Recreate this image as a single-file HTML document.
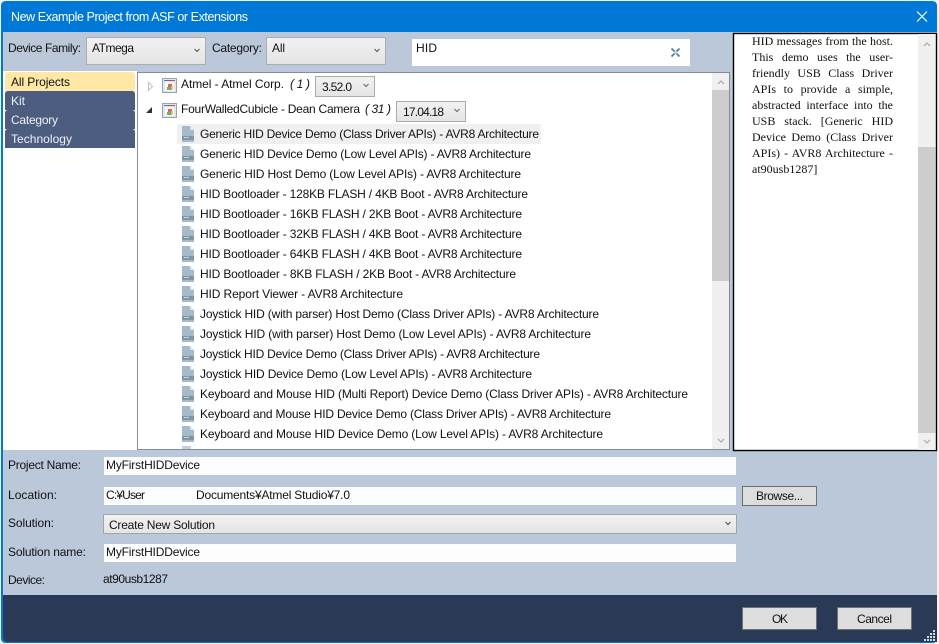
<!DOCTYPE html>
<html><head><meta charset="utf-8"><title>New Example Project from ASF or Extensions</title>
<style>
html,body{margin:0;padding:0;width:939px;height:644px;overflow:hidden;background:#f2f2f2}
svg{position:absolute;left:0;top:0}
svg text{font-family:"Liberation Sans",sans-serif;font-size:12px;fill:#111}
.d{position:absolute;left:752px;width:141px;height:16px;line-height:16px;font:12px/16px "Liberation Serif",serif;color:#111;text-align:justify;text-align-last:justify;white-space:normal}
</style></head><body>
<svg width="939" height="644" viewBox="0 0 939 644">
<defs>
<linearGradient id="g" x1="0" y1="0" x2="0" y2="1"><stop offset="0" stop-color="#f2f2f2"/><stop offset="1" stop-color="#e4e4e4"/></linearGradient>
<g id="ic"><path d="M0 0h8l4 4v12H0z" fill="#a6bac9"/><path d="M8 0l4 4H8z" fill="#dde6ec"/><rect y="10" width="12" height="4" fill="#7f96a7"/><rect x="2" y="11" width="5" height="1" fill="#c9d5dd"/></g>
<g id="tr"><rect x=".5" y=".5" width="14" height="14" fill="#dfe6ee" stroke="#97a3b1"/><rect x="2" y="2" width="4" height="1" fill="#3f7fc4"/><rect x="6" y="2" width="7" height="1" fill="#c24a4a"/><rect x="3" y="4" width="9" height="9" fill="#f7f9fb"/><rect x="6" y="6" width="4" height="3" fill="#d9635f"/><rect x="5" y="9" width="5" height="3" fill="#6fae6f"/><rect x="9" y="8" width="2" height="3" fill="#e6c34a"/></g>
</defs>
<!-- window -->
<path d="M6 1H932q5 0 5 5V638q0 5-5 5H6q-5 0-5-5V6q0-5 5-5z" fill="#0078d7"/>
<rect x="3" y="32" width="934" height="563" fill="#bac8d9"/>
<path d="M3 595H937V642H8q-5 0-5-5z" fill="#2a3a56"/>
<text x="11" y="21" textLength="237" lengthAdjust="spacing" style="fill:#fff;font-size:12.5px">New Example Project from ASF or Extensions</text>
<path d="M917 11.500l10 10M927 11.500l-10 10" stroke="#fff" stroke-width="1.200" fill="none"/>

<!-- top row -->
<text x="8" y="52" textLength="73">Device Family:</text>
<rect x="86.500" y="37.500" width="119" height="27" fill="url(#g)" stroke="#acacac"/>
<text x="92" y="52" textLength="42">ATmega</text>
<path d="M194.500 49l2.500 2.500 2.500-2.500" stroke="#555" fill="none"/>
<text x="212" y="52" textLength="50">Category:</text>
<rect x="266.500" y="37.500" width="119" height="27" fill="url(#g)" stroke="#acacac"/>
<text x="272" y="52" textLength="13">All</text>
<path d="M374.500 49l2.500 2.500 2.500-2.500" stroke="#555" fill="none"/>
<rect x="412" y="39" width="278" height="27" fill="#fff"/>
<text x="416" y="52" textLength="21">HID</text>
<path d="M671.500 48.500l8 8M679.500 48.500l-8 8" stroke="#4f7ea8" stroke-width="1.800" fill="none"/>
<circle cx="675.500" cy="52.500" r="1.500" fill="#c4d4e2"/>

<!-- sidebar -->
<rect x="3" y="71" width="134" height="379" fill="#fff"/>
<path d="M8 72H132q3 0 3 3V91H5V75q0-3 3-3z" fill="#ffe8a6"/>
<path d="M8 91H132q3 0 3 3v16H5V94q0-3 3-3z" fill="#4d5d80"/>
<path d="M8 110H132q3 0 3 3v16H5v-16q0-3 3-3z" fill="#4d5d80"/>
<path d="M8 129H132q3 0 3 3v16H5v-16q0-3 3-3z" fill="#4d5d80"/>
<text x="11" y="86" textLength="59">All Projects</text>
<text x="11" y="105" textLength="14" style="fill:#eef1f6">Kit</text>
<text x="11" y="124" textLength="47" style="fill:#eef1f6">Category</text>
<text x="11" y="143" textLength="61" style="fill:#eef1f6">Technology</text>

<!-- list -->
<rect x="137.500" y="72.500" width="592" height="377" fill="#fff" stroke="#868b96"/>
<rect x="712" y="73" width="17" height="376" fill="#f0f0f0"/>
<rect x="712" y="90" width="17" height="191" fill="#cdcdcd"/>
<path d="M718 84l3-3 3 3" stroke="#b0b0b0" stroke-width="1.300" fill="none"/>
<path d="M718 439l3 3 3-3" stroke="#b0b0b0" stroke-width="1.300" fill="none"/>
<path d="M148.500 82.500v8l4-4z" fill="#fff" stroke="#c0c0c0"/>
<path d="M152 107v6h-6z" fill="#333"/>
<use href="#tr" x="162" y="78"/>
<use href="#tr" x="162" y="103"/>
<text x="181" y="88" textLength="103">Atmel - Atmel Corp.</text>
<text x="290" y="88" textLength="20" style="font-style:italic">( 1 )</text>
<rect x="315.500" y="76.500" width="59" height="20" fill="url(#g)" stroke="#acacac"/>
<text x="322" y="91" textLength="30">3.52.0</text>
<path d="M363.500 84l2.500 2.500 2.500-2.500" stroke="#666" fill="none"/>
<text x="181" y="113" textLength="179">FourWalledCubicle - Dean Camera</text>
<text x="365" y="113" textLength="26" style="font-style:italic">( 31 )</text>
<rect x="396.500" y="101.500" width="69" height="20" fill="url(#g)" stroke="#acacac"/>
<text x="403" y="116" textLength="41">17.04.18</text>
<path d="M454.500 109l2.500 2.500 2.500-2.500" stroke="#666" fill="none"/>
<rect x="177" y="124" width="364" height="20" fill="#f0f0f0"/>
<use href="#ic" x="182" y="126"/><text x="200" y="138" textLength="339">Generic HID Device Demo (Class Driver APIs) - AVR8 Architecture</text>
<use href="#ic" x="182" y="146"/><text x="200" y="158" textLength="331">Generic HID Device Demo (Low Level APIs) - AVR8 Architecture</text>
<use href="#ic" x="182" y="166"/><text x="200" y="178" textLength="321">Generic HID Host Demo (Low Level APIs) - AVR8 Architecture</text>
<use href="#ic" x="182" y="186"/><text x="200" y="198" textLength="328">HID Bootloader - 128KB FLASH / 4KB Boot - AVR8 Architecture</text>
<use href="#ic" x="182" y="206"/><text x="200" y="218" textLength="322">HID Bootloader - 16KB FLASH / 2KB Boot - AVR8 Architecture</text>
<use href="#ic" x="182" y="226"/><text x="200" y="238" textLength="322">HID Bootloader - 32KB FLASH / 4KB Boot - AVR8 Architecture</text>
<use href="#ic" x="182" y="246"/><text x="200" y="258" textLength="322">HID Bootloader - 64KB FLASH / 4KB Boot - AVR8 Architecture</text>
<use href="#ic" x="182" y="266"/><text x="200" y="278" textLength="316">HID Bootloader - 8KB FLASH / 2KB Boot - AVR8 Architecture</text>
<use href="#ic" x="182" y="286"/><text x="200" y="298" textLength="203">HID Report Viewer - AVR8 Architecture</text>
<use href="#ic" x="182" y="306"/><text x="200" y="318" textLength="399">Joystick HID (with parser) Host Demo (Class Driver APIs) - AVR8 Architecture</text>
<use href="#ic" x="182" y="326"/><text x="200" y="338" textLength="391">Joystick HID (with parser) Host Demo (Low Level APIs) - AVR8 Architecture</text>
<use href="#ic" x="182" y="346"/><text x="200" y="358" textLength="340">Joystick HID Device Demo (Class Driver APIs) - AVR8 Architecture</text>
<use href="#ic" x="182" y="366"/><text x="200" y="378" textLength="332">Joystick HID Device Demo (Low Level APIs) - AVR8 Architecture</text>
<use href="#ic" x="182" y="386"/><text x="200" y="398" textLength="488">Keyboard and Mouse HID (Multi Report) Device Demo (Class Driver APIs) - AVR8 Architecture</text>
<use href="#ic" x="182" y="406"/><text x="200" y="418" textLength="411">Keyboard and Mouse HID Device Demo (Class Driver APIs) - AVR8 Architecture</text>
<use href="#ic" x="182" y="426"/><text x="200" y="438" textLength="403">Keyboard and Mouse HID Device Demo (Low Level APIs) - AVR8 Architecture</text>
<rect x="182" y="446" width="9" height="3" fill="#c5d2db"/>

<!-- description pane -->
<rect x="733.500" y="33.500" width="203" height="417" fill="#fff" stroke="#000" stroke-width="1.400"/>
<rect x="918" y="34" width="17.500" height="416" fill="#f0f0f0"/>
<rect x="918" y="147" width="17.500" height="286" fill="#cdcdcd"/>
<path d="M924 46l3-3 3 3" stroke="#b0b0b0" stroke-width="1.300" fill="none"/>
<path d="M924 440l3 3 3-3" stroke="#b0b0b0" stroke-width="1.300" fill="none"/>

<!-- form -->
<text x="8" y="469" textLength="73">Project Name:</text>
<rect x="104" y="457" width="632" height="18" fill="#fdfdfd"/>
<text x="106" y="469" textLength="94">MyFirstHIDDevice</text>
<text x="8" y="499" textLength="49">Location:</text>
<rect x="104" y="487" width="632" height="18" fill="#fdfdfd"/>
<text x="106" y="499" textLength="39">C:¥User</text>
<text x="196" y="499" textLength="154">Documents¥Atmel Studio¥7.0</text>
<rect x="742.500" y="486.500" width="74" height="19" fill="#ddd" stroke="#707070"/>
<text x="756" y="500" textLength="47">Browse...</text>
<text x="8" y="527" textLength="46">Solution:</text>
<rect x="103.500" y="514.500" width="633" height="19" fill="url(#g)" stroke="#a4a4a4"/>
<text x="109" y="529" textLength="106">Create New Solution</text>
<path d="M725.500 522l2.500 2.500 2.500-2.500" stroke="#555" stroke-width="1.200" fill="none"/>
<text x="8" y="556" textLength="78">Solution name:</text>
<rect x="104" y="544" width="632" height="18" fill="#fdfdfd"/>
<text x="106" y="556" textLength="94">MyFirstHIDDevice</text>
<text x="8" y="584" textLength="37">Device:</text>
<text x="103" y="583" textLength="65">at90usb1287</text>

<!-- footer buttons -->
<rect x="742.500" y="607.500" width="74" height="22" fill="#ddd" stroke="#707070"/>
<text x="772" y="623" textLength="16">OK</text>
<rect x="837.500" y="607.500" width="74" height="22" fill="#ddd" stroke="#707070"/>
<text x="857" y="623" textLength="35">Cancel</text>
<g fill="#d5dbe5">
<rect x="933" y="630" width="2" height="2"/>
<rect x="930" y="633" width="2" height="2"/><rect x="933" y="633" width="2" height="2"/>
<rect x="927" y="636" width="2" height="2"/><rect x="930" y="636" width="2" height="2"/><rect x="933" y="636" width="2" height="2"/>
<rect x="924" y="639" width="2" height="2"/><rect x="927" y="639" width="2" height="2"/><rect x="930" y="639" width="2" height="2"/><rect x="933" y="639" width="2" height="2"/>
</g>
</svg>
<div class="d" style="top:33px">HID messages from the host.</div>
<div class="d" style="top:49px">This demo uses the user-</div>
<div class="d" style="top:65px">friendly USB Class Driver</div>
<div class="d" style="top:81px">APIs to provide a simple,</div>
<div class="d" style="top:97px">abstracted interface into the</div>
<div class="d" style="top:113px">USB stack. [Generic HID</div>
<div class="d" style="top:129px">Device Demo (Class Driver</div>
<div class="d" style="top:145px">APIs) - AVR8 Architecture -</div>
<div class="d" style="top:161px;text-align-last:left">at90usb1287]</div>
</body></html>
